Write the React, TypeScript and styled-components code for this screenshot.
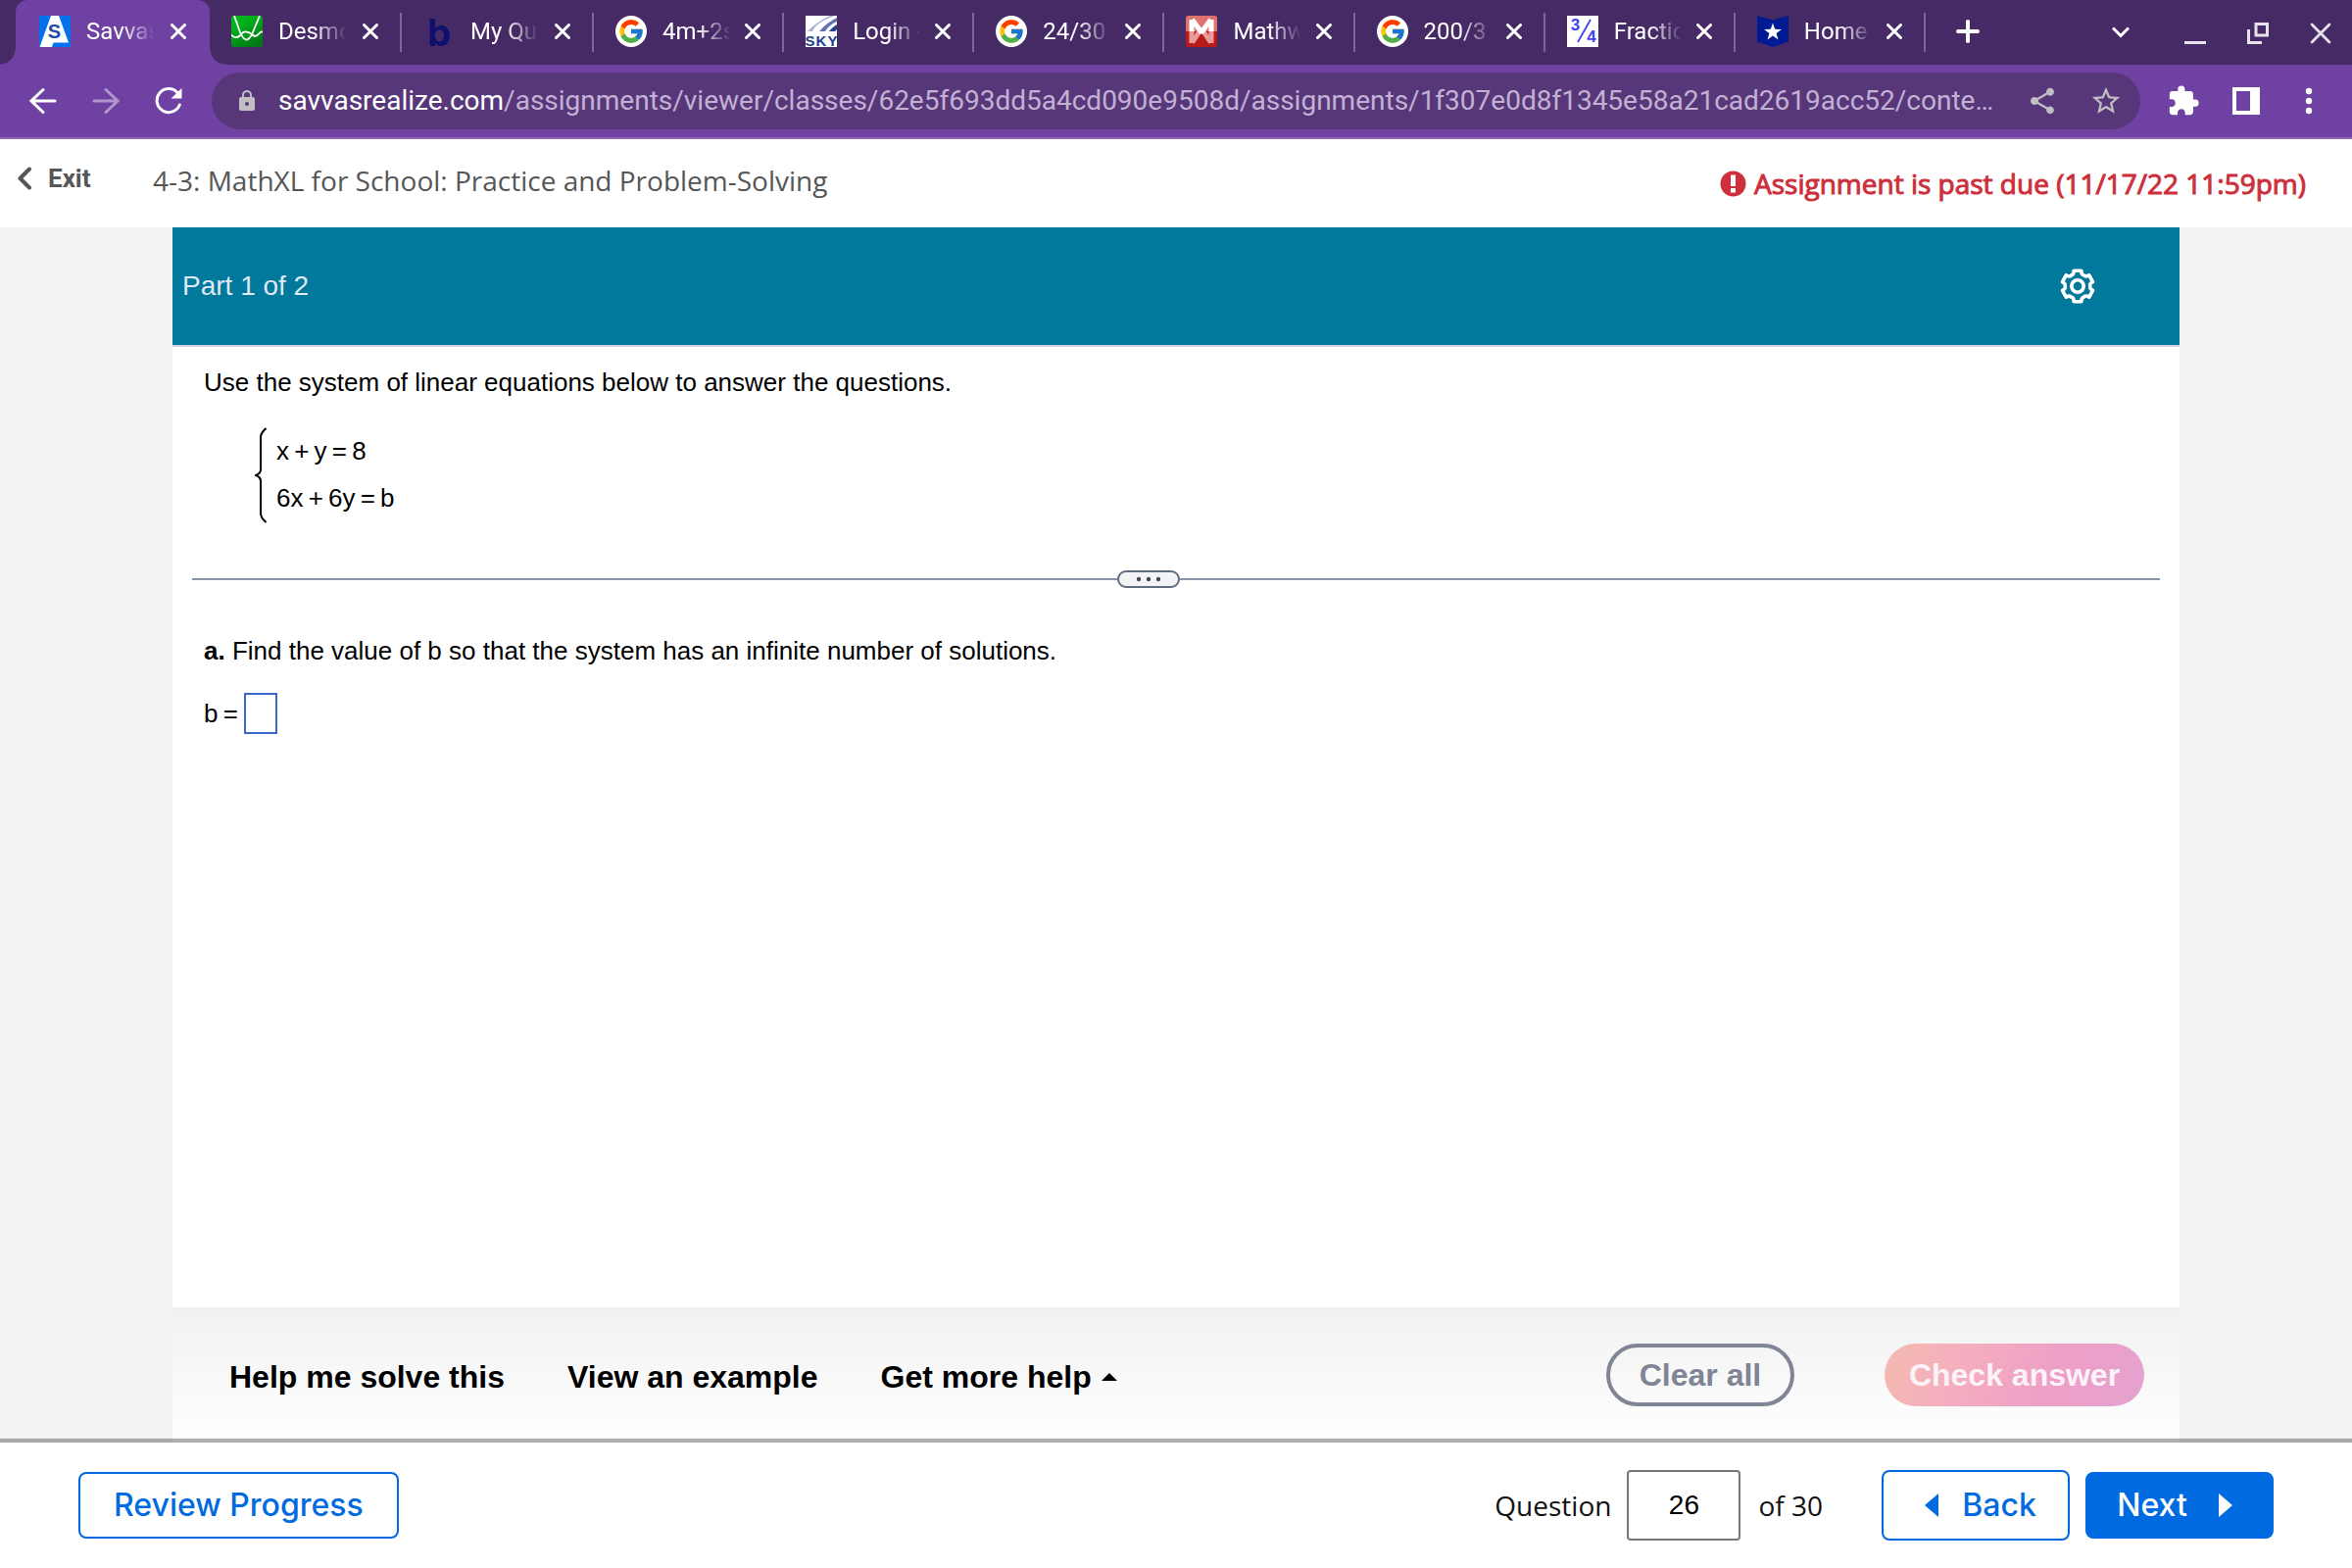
import React from 'react';
import styled, { createGlobalStyle } from 'styled-components';
import { FcGoogle } from 'react-icons/fc';
import { MdLock, MdShare, MdStarBorder, MdExtension } from 'react-icons/md';

const ROBOTO = "Roboto, 'Liberation Sans', sans-serif";
const OPEN = "'Open Sans', 'Noto Sans', sans-serif";
const ARIAL = "'Liberation Sans', Arial, sans-serif";
const INTER = "Inter, 'Liberation Sans', sans-serif";

const GlobalStyle = createGlobalStyle`
  * { box-sizing: border-box; }
  body { margin: 0; background: #f3f3f3; font-family: ${ARIAL}; }
  button { border: 0; padding: 0; background: none; color: inherit; font: inherit; cursor: pointer; }
  p { margin: 0; }
  svg { display: block; flex: none; }
`;

const Page = styled.div`
  display: flex;
  flex-direction: column;
  min-height: 100vh;
`;

/* ---------- browser chrome ---------- */

const TabStrip = styled.header`
  display: flex;
  height: 66px;
  padding-left: 16px;
  background: #462a66;
  color: #fff;
  font: 24px/32px ${ROBOTO};
`;

const TabList = styled.div`
  display: flex;
  flex: 0 1 1949px;
  min-width: 0;
`;

const Tab = styled.div<{ $active?: boolean }>`
  position: relative;
  display: flex;
  align-items: center;
  flex: 1 1 0;
  min-width: 0;
  padding-left: ${p => (p.$active ? 24 : 22)}px;
  background: ${p => (p.$active ? '#6e41a2' : 'transparent')};
  border-radius: 12px 12px 0 0;

  &:nth-child(1) { flex: 0 1 198px; }
  &:nth-child(2),
  &:nth-child(3) { flex: 0 1 196px; }

  &::before,
  &::after {
    content: '';
    display: ${p => (p.$active ? 'block' : 'none')};
    position: absolute;
    bottom: 0;
    width: 16px;
    height: 16px;
  }
  &::before {
    left: -16px;
    background: radial-gradient(circle at 0 0, transparent 15px, #6e41a2 16px);
  }
  &::after {
    right: -16px;
    background: radial-gradient(circle at 100% 0, transparent 15px, #6e41a2 16px);
  }
`;

const TabBody = styled.div<{ $active?: boolean }>`
  display: flex;
  align-items: center;
  flex: 1;
  min-width: 0;
  padding: 0 ${p => (p.$active ? 24 : 22)}px 2px 0;
`;

const TabTitle = styled.span`
  flex: 1;
  min-width: 0;
  margin: 0 16px;
  overflow: hidden;
  white-space: nowrap;
  mask-image: linear-gradient(to right, #000 36px, transparent 70px);
`;

const TabDivider = styled.span`
  width: 2px;
  height: 40px;
  background: #7d6694;
`;

const NewTab = styled.button`
  display: grid;
  place-items: center;
  width: 86px;
  padding-bottom: 2px;
`;

const WindowControls = styled.div`
  display: flex;
  align-items: center;
  margin-left: auto;
`;

const WindowButton = styled.button`
  display: grid;
  place-items: center;
  width: 64px;
  height: 66px;
  padding-top: 2px;
  color: #e6e3ea;
`;

const TabSearch = styled(WindowButton)`
  margin-right: 12px;
  padding-top: 0;
  color: #fff;
`;

const Toolbar = styled.div`
  display: flex;
  align-items: center;
  height: 76px;
  padding: 0 12px;
  background: #6e41a2;
  border-bottom: 2px solid #9267b5;
  color: #fff;
`;

const ToolButton = styled.button<{ $dim?: boolean }>`
  display: grid;
  place-items: center;
  width: 64px;
  height: 58px;
  opacity: ${p => (p.$dim ? 0.45 : 1)};
`;

const Omnibox = styled.div`
  display: flex;
  align-items: center;
  flex: 1;
  min-width: 0;
  height: 58px;
  margin: 0 12px;
  padding: 0 18px 0 24px;
  border-radius: 29px;
  background: #57377a;
  color: #c0bec2;
`;

const Url = styled.div`
  flex: 1;
  min-width: 0;
  margin: 0 24px 0 20px;
  overflow: hidden;
  white-space: nowrap;
  font: 28px/36px ${ROBOTO};
  color: #c3b1d3;

  b { font-weight: 400; color: #fff; }
`;

const OmniActions = styled.div`
  display: flex;
  align-items: center;
  gap: 32px;
`;

/* ---------- assignment header ---------- */

const AssignmentBar = styled.div`
  display: flex;
  align-items: center;
  height: 90px;
  padding: 0 47px 6px 18px;
  background: #fff;
  color: #555657;
  font: 28px/40px ${OPEN};
`;

const ExitLink = styled.a`
  display: flex;
  align-items: center;
  gap: 16px;
  width: 138px;
  padding-bottom: 4px;
  color: inherit;
  text-decoration: none;
  font: 700 26px/32px ${ROBOTO};
`;

const AssignmentTitle = styled.h1`
  margin: 0;
  font: inherit;
`;

const PastDue = styled.div`
  display: flex;
  align-items: center;
  gap: 8px;
  margin-left: auto;
  padding-top: 6px;
  color: #cd2f3c;
  -webkit-text-stroke: 1px currentColor;
`;

/* ---------- exercise ---------- */

const Workspace = styled.main`
  display: flex;
  flex-direction: column;
  flex: 1;
  margin: 0 176px;
  background: #fff;
`;

const PartBar = styled.div`
  display: flex;
  align-items: center;
  justify-content: space-between;
  height: 122px;
  padding: 0 84px 0 10px;
  background: #00799c;
  border-bottom: 2px solid #cfd2e0;
  color: #dfe9f3;
  font: 28px/32px ${ARIAL};
`;

const Exercise = styled.div`
  flex: 1;
  padding: 20px 20px 0;
  font: 26px/32px ${ARIAL};
  color: #000;
`;

const Statement = styled.p`
  padding: 0 12px;
`;

const System = styled.div`
  display: flex;
  gap: 10px;
  margin: 30px 0 48px 64px;
  line-height: 48px;
`;

const SplitRow = styled.div`
  display: flex;
  align-items: center;
  margin-bottom: 48px;
`;

const Rule = styled.span<{ $basis?: string }>`
  flex: ${p => (p.$basis ? `0 0 ${p.$basis}` : '1')};
  height: 2px;
  background: #8b93aa;
`;

const Handle = styled.button`
  display: grid;
  place-items: center;
  width: 64px;
  height: 18px;
  border: 2px solid #5f6d7e;
  border-radius: 9px;
  background: #f3f4f6;
`;

const Answer = styled.label`
  display: flex;
  align-items: center;
  gap: 6px;
  margin-top: 27px;
  padding: 0 12px;
`;

const AnswerBox = styled.input`
  width: 34px;
  height: 42px;
  padding: 0;
  border: 2px solid #3567cf;
  background: #fff;
  font: inherit;
  text-align: center;
`;

const HelpBar = styled.div`
  display: flex;
  align-items: center;
  height: 138px;
  padding: 0 36px 0 58px;
  background: linear-gradient(#f1f1f1, #fff);
  font: 700 32px/40px ${ARIAL};
`;

const HelpLinks = styled.div`
  display: flex;
  gap: 64px;
  padding-top: 4px;
  color: #000;
`;

const HelpButton = styled.button`
  display: flex;
  align-items: center;
  gap: 10px;
`;

const Actions = styled.div`
  display: flex;
  gap: 92px;
  margin-left: auto;
`;

const ClearButton = styled.button`
  width: 192px;
  height: 64px;
  border: 4px solid #7f8594;
  border-radius: 32px;
  color: #7f8594;
`;

const CheckButton = styled.button`
  width: 265px;
  height: 64px;
  border-radius: 32px;
  background: linear-gradient(115deg, #f4bbae 0%, #f4aebf 30%, #ef9fc6 62%, #e3a2d0 100%);
  color: #fbf3f7;
`;

/* ---------- question navigation ---------- */

const BottomNav = styled.footer`
  position: relative;
  display: flex;
  align-items: center;
  height: 128px;
  padding: 0 80px;
  background: #fff;
  box-shadow: 0 -4px 1px rgba(0, 0, 0, 0.31);
  font: 28px/40px ${OPEN};
  color: #111;
`;

const NavButton = styled.button`
  display: flex;
  align-items: center;
  justify-content: center;
  gap: 24px;
  min-width: 192px;
  height: 68px;
  padding: 0 34px;
  border: 2px solid #006be0;
  border-radius: 8px;
  background: #fff;
  color: #006be0;
  font: 500 32px/40px ${INTER};
`;

const BackButton = styled(NavButton)`
  height: 72px;
  padding: 0 24px 0 34px;
`;

const NextButton = styled(NavButton)`
  gap: 32px;
  padding: 0 34px 0 24px;
  background: #006be0;
  color: #fff;
`;

const Pager = styled.div`
  display: flex;
  align-items: center;
  gap: 18px;
  margin-left: auto;
`;

const PagerLabel = styled.label`
  display: flex;
  align-items: center;
  gap: 16px;
`;

const PageInput = styled.input`
  width: 116px;
  height: 72px;
  padding: 0;
  border: 2px solid #76777a;
  border-radius: 4px;
  background: #fff;
  color: #000;
  font: 28px/32px ${ARIAL};
  text-align: center;
`;

const NavPair = styled.div`
  display: flex;
  align-items: center;
  gap: 16px;
  margin-left: 60px;
`;

/* ---------- drawings ---------- */

const CrossIcon = ({ size = 16, weight = 3 }: { size?: number; weight?: number }) => (
  <svg width={size} height={size} viewBox="0 0 16 16" fill="none" stroke="currentColor" strokeWidth={weight} strokeLinecap="round">
    <path d="M1.5 1.5 14.5 14.5M14.5 1.5 1.5 14.5" />
  </svg>
);

const SavvasIcon = () => (
  <svg width="32" height="32" viewBox="0 0 32 32">
    <rect width="32" height="32" fill="#0273eb" />
    <path d="M12 0h8l10 27.500H14.500L13 32H0.500z" fill="#fff" />
    <text x="15.500" y="23" fontFamily="Liberation Sans" fontWeight="700" fontSize="20" fill="#1b4da0" textAnchor="middle">S</text>
  </svg>
);

const DesmosIcon = () => (
  <svg width="32" height="32" viewBox="0 0 32 32">
    <defs>
      <linearGradient id="desmos" x1="0" y1="0" x2="0.6" y2="1">
        <stop offset="0.3" stopColor="#02b31c" />
        <stop offset="1" stopColor="#017a14" />
      </linearGradient>
      <clipPath id="desmosClip"><rect width="32" height="32" rx="3" /></clipPath>
    </defs>
    <g clipPath="url(#desmosClip)" fill="none" stroke="#fff" strokeWidth="1.800">
      <rect width="32" height="32" fill="url(#desmos)" stroke="none" />
      <path d="M3 0 9 17Q15.500 32 22 17L29 0" />
      <path d="M0 19.500C4 24 8 22 10.500 18.500s8-2 11 1 6 0 7.500-2 2-1 3-1" />
    </g>
  </svg>
);

const BrainlyIcon = () => (
  <svg width="32" height="32" viewBox="0 0 32 32">
    <text x="16" y="30.500" fontFamily="Inter" fontWeight="700" fontSize="38" fill="#100f6b" textAnchor="middle">b</text>
  </svg>
);

const GoogleBadge = styled.span`
  display: grid;
  place-items: center;
  flex: none;
  width: 32px;
  height: 32px;
  border-radius: 16px;
  background: #fff;
`;

const GoogleIcon = () => (
  <GoogleBadge><FcGoogle size={28} /></GoogleBadge>
);

const SkyIcon = () => (
  <svg width="32" height="32" viewBox="0 0 32 32">
    <rect width="32" height="32" fill="#fff" />
    <path d="M2 16C10 8 18 3 25 0h5C18 4 10 9 7 16z" fill="#a9afd3" />
    <path d="M14 16C20 9 26 5 32 2v4c-5 2-9 5-12 10z" fill="#6472b2" />
    <path d="M24 16c2-3 5-5 8-7v5l-2 2z" fill="#24408c" />
    <g fontFamily="Liberation Sans" fontWeight="700" fontSize="15" fill="#1d4190" textAnchor="middle">
      <text x="4.500" y="31">S</text>
      <text x="16" y="31">K</text>
      <text x="27.500" y="31">Y</text>
    </g>
  </svg>
);

const MathwayIcon = () => (
  <svg width="32" height="32" viewBox="0 0 32 32">
    <rect width="32" height="32" rx="3" fill="#b81a1a" />
    <path d="M0 16V3a3 3 0 0 1 3-3h26a3 3 0 0 1 3 3v13z" fill="#dc7370" />
    <path d="M6 15v13M26 15v13M6.500 27.500 16 13l9.500 14.500" fill="none" stroke="#ea9a99" strokeWidth="5" strokeLinejoin="bevel" />
    <path d="M6 16V4M26 16V4M6.500 4 16 17 25.500 4" fill="none" stroke="#fff" strokeWidth="5" strokeLinejoin="bevel" />
  </svg>
);

const FractionIcon = () => (
  <svg width="32" height="32" viewBox="0 0 32 32">
    <rect width="32" height="32" fill="#fff" />
    <g fontFamily="Liberation Sans" fontWeight="700" fontSize="17" fill="#4343f5" textAnchor="middle">
      <text x="8.500" y="15">3</text>
      <text x="25" y="27">4</text>
    </g>
    <path d="M24 4 11 27" stroke="#4343f5" strokeWidth="1.800" />
  </svg>
);

const StarShieldIcon = () => (
  <svg width="32" height="32" viewBox="0 0 32 32">
    <path d="M0 0 16 4.500 32 0v26.500L16 32 0 26.500z" fill="#001a94" />
    <path d="m16 7.500 2.200 6.300 6.700.1-5.300 4.100 1.900 6.400L16 20.600l-5.500 3.800 1.900-6.400-5.300-4.100 6.700-.1z" fill="#fff" />
  </svg>
);

const ArrowIcon = ({ forward }: { forward?: boolean }) => (
  <svg width="28" height="28" viewBox="0 0 28 28" fill="none" stroke="currentColor" strokeWidth="3" strokeLinecap="round">
    {forward ? <path d="M2 14h24M14 2.500 26 14 14 25.500" /> : <path d="M26 14H2M14 2.500 2 14l12 11.500" />}
  </svg>
);

const ReloadIcon = () => (
  <svg width="28" height="28" viewBox="0 0 28 28">
    <path d="M25.300 18A12 12 0 1 1 23 5.500" fill="none" stroke="currentColor" strokeWidth="3" strokeLinecap="round" />
    <path d="M27.500 1v10.500H16.500z" fill="currentColor" />
  </svg>
);

/* Six-toothed outline: flat teeth joined by curved valleys. */
const gearPath = () => {
  const at = (deg: number, r: number) => {
    const a = ((deg - 90) * Math.PI) / 180;
    return `${(20 + r * Math.cos(a)).toFixed(2)} ${(20 + r * Math.sin(a)).toFixed(2)}`;
  };
  let d = `M${at(-14, 16.2)}`;
  for (let t = 0; t < 360; t += 60) {
    d += `L${at(t + 14, 16.2)}C${at(t + 18, 12)} ${at(t + 25, 12.6)} ${at(t + 30, 12.8)}`;
    d += `S${at(t + 42, 12)} ${at(t + 46, 16.2)}`;
  }
  return `${d}Z`;
};

const GearIcon = () => (
  <svg width="40" height="40" viewBox="0 0 40 40" fill="none" stroke="#fff" strokeWidth="3.600" strokeLinejoin="round">
    <path d={gearPath()} />
    <circle cx="20" cy="20" r="6.200" />
  </svg>
);

const BraceIcon = () => (
  <svg width="12" height="98" viewBox="0 0 12 98" fill="none" stroke="#000" strokeWidth="2">
    <path d="M11.500 1C8 4 6 6 6 10v33c0 3-2 5-5 6 3 1 5 3 5 6v33c0 4 2 6 5.500 9" />
  </svg>
);

/* ---------- page ---------- */

const tabs = [
  { title: 'Savvas', icon: <SavvasIcon />, active: true },
  { title: 'Desmo', icon: <DesmosIcon /> },
  { title: 'My Qu', icon: <BrainlyIcon /> },
  { title: '4m+2s', icon: <GoogleIcon /> },
  { title: 'Login -', icon: <SkyIcon /> },
  { title: '24/30', icon: <GoogleIcon /> },
  { title: 'Mathw', icon: <MathwayIcon /> },
  { title: '200/3', icon: <GoogleIcon /> },
  { title: 'Fractio', icon: <FractionIcon /> },
  { title: 'Home', icon: <StarShieldIcon /> },
];

export default function App() {
  return (
    <Page>
      <GlobalStyle />
      <TabStrip>
        <TabList>
          {tabs.map(tab => (
            <Tab key={tab.title} $active={tab.active}>
              <TabBody $active={tab.active}>
                {tab.icon}
                <TabTitle>{tab.title}</TabTitle>
                <button aria-label="Close tab"><CrossIcon /></button>
              </TabBody>
              {tab.active || <TabDivider />}
            </Tab>
          ))}
        </TabList>
        <NewTab aria-label="New tab">
          <svg width="24" height="24" viewBox="0 0 24 24" stroke="#fff" strokeWidth="4" strokeLinecap="round">
            <path d="M12 2v20M2 12h20" />
          </svg>
        </NewTab>
        <WindowControls>
          <TabSearch aria-label="Search tabs">
            <svg width="18" height="12" viewBox="0 0 18 12" fill="none" stroke="currentColor" strokeWidth="3">
              <path d="m1 1.500 8 8 8-8" />
            </svg>
          </TabSearch>
          <WindowButton aria-label="Minimize">
            <svg width="22" height="22" viewBox="0 0 22 22" fill="currentColor"><path d="M0 19h22v3H0z" /></svg>
          </WindowButton>
          <WindowButton aria-label="Restore">
            <svg width="22" height="22" viewBox="0 0 22 22" fill="none" stroke="currentColor" strokeWidth="3">
              <path d="M9 1.500h11.500v11.500H9zM1.500 7v13.500H15" />
            </svg>
          </WindowButton>
          <WindowButton aria-label="Close window"><CrossIcon size={22} weight={2} /></WindowButton>
        </WindowControls>
      </TabStrip>

      <Toolbar>
        <ToolButton aria-label="Back"><ArrowIcon /></ToolButton>
        <ToolButton aria-label="Forward" $dim><ArrowIcon forward /></ToolButton>
        <ToolButton aria-label="Reload"><ReloadIcon /></ToolButton>
        <Omnibox>
          <MdLock size={24} />
          <Url>
            <b>savvasrealize.com</b>/assignments/viewer/classes/62e5f693dd5a4cd090e9508d/assignments/1f307e0d8f1345e58a21cad2619acc52/conte…
          </Url>
          <OmniActions>
            <button aria-label="Share"><MdShare size={32} /></button>
            <button aria-label="Bookmark"><MdStarBorder size={34} /></button>
          </OmniActions>
        </Omnibox>
        <ToolButton aria-label="Extensions"><MdExtension size={34} /></ToolButton>
        <ToolButton aria-label="Side panel">
          <svg width="28" height="28" viewBox="0 0 28 28"><path fill="currentColor" fillRule="evenodd" d="M0 0h28v28H0zM4 4v20h14V4z" /></svg>
        </ToolButton>
        <ToolButton aria-label="Menu">
          <svg width="8" height="28" viewBox="0 0 8 28" fill="currentColor">
            <circle cx="4" cy="4" r="3.200" /><circle cx="4" cy="14" r="3.200" /><circle cx="4" cy="24" r="3.200" />
          </svg>
        </ToolButton>
      </Toolbar>

      <AssignmentBar>
        <ExitLink href="#exit">
          <svg width="15" height="24" viewBox="0 0 15 24" fill="none" stroke="currentColor" strokeWidth="4" strokeLinecap="round" strokeLinejoin="round">
            <path d="M12 2.500 2.500 12l9.500 9.500" />
          </svg>
          Exit
        </ExitLink>
        <AssignmentTitle>4-3: MathXL for School: Practice and Problem-Solving</AssignmentTitle>
        <PastDue>
          <svg width="27" height="27" viewBox="0 0 27 27">
            <circle cx="13.500" cy="13.500" r="13" fill="#cd2f3c" />
            <path d="M11 4.500h5V16h-5zM11 18h5v4.500h-5z" fill="#fff" />
          </svg>
          Assignment is past due (11/17/22 11:59pm)
        </PastDue>
      </AssignmentBar>

      <Workspace>
        <PartBar>
          <span>Part 1 of 2</span>
          <button aria-label="Settings"><GearIcon /></button>
        </PartBar>
        <Exercise>
          <Statement>Use the system of linear equations below to answer the questions.</Statement>
          <System>
            <BraceIcon />
            <div>
              <p>{'x\u2009+\u2009y\u2009=\u20098'}</p>
              <p>{'6x\u2009+\u20096y\u2009=\u2009b'}</p>
            </div>
          </System>
          <SplitRow>
            <Rule $basis="47%" />
            <Handle aria-label="Resize panes">
              <svg width="28" height="6" viewBox="0 0 28 6" fill="#44474c">
                <circle cx="4" cy="3" r="2.200" /><circle cx="14" cy="3" r="2.200" /><circle cx="24" cy="3" r="2.200" />
              </svg>
            </Handle>
            <Rule />
          </SplitRow>
          <Statement><b>a.</b> Find the value of b so that the system has an infinite number of solutions.</Statement>
          <Answer>{'b\u2009='}<AnswerBox type="text" /></Answer>
        </Exercise>
        <HelpBar>
          <HelpLinks>
            <HelpButton>Help me solve this</HelpButton>
            <HelpButton>View an example</HelpButton>
            <HelpButton>
              Get more help
              <svg width="16" height="8" viewBox="0 0 16 8"><path d="M8 0l8 8H0z" fill="#000" /></svg>
            </HelpButton>
          </HelpLinks>
          <Actions>
            <ClearButton>Clear all</ClearButton>
            <CheckButton>Check answer</CheckButton>
          </Actions>
        </HelpBar>
      </Workspace>

      <BottomNav>
        <NavButton>Review Progress</NavButton>
        <Pager>
          <PagerLabel>
            Question
            <PageInput type="text" defaultValue="26" />
          </PagerLabel>
          <span>of 30</span>
        </Pager>
        <NavPair>
          <BackButton>
            <svg width="14" height="24" viewBox="0 0 14 24"><path d="M14 0v24L0 12z" fill="currentColor" /></svg>
            Back
          </BackButton>
          <NextButton>
            Next
            <svg width="14" height="24" viewBox="0 0 14 24"><path d="M0 0v24l14-12z" fill="currentColor" /></svg>
          </NextButton>
        </NavPair>
      </BottomNav>
    </Page>
  );
}
